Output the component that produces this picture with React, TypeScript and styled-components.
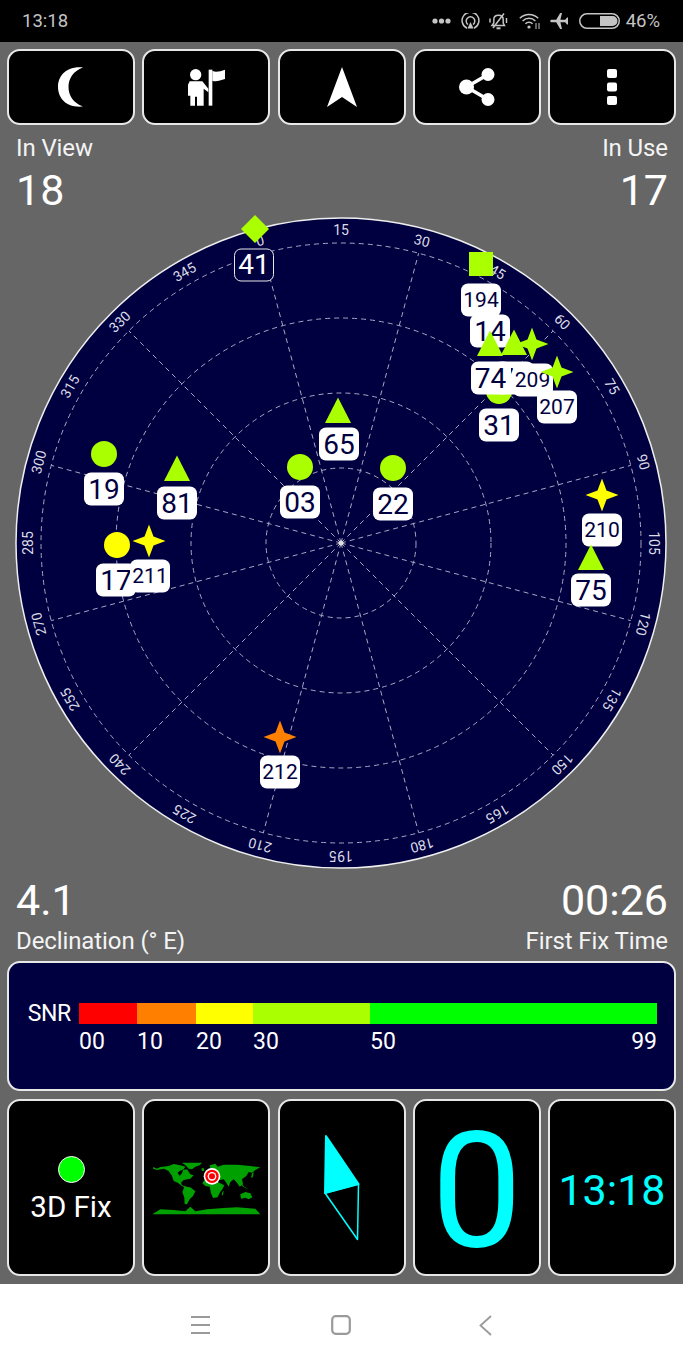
import React from 'react';
import styled, { createGlobalStyle } from 'styled-components';

const NAVY = '#000040';
const LIME = '#aaff00';
const YELLOW = '#ffff00';
const ORANGE = '#ff8000';
const CYAN = '#00ffff';

const GlobalStyle = createGlobalStyle`
  html, body {
    margin: 0;
    padding: 0;
    background: #666;
    font-family: Roboto, "Liberation Sans", sans-serif;
  }
`;

const Page = styled.div`
  width: 683px;
  height: 1366px;
  display: flex;
  flex-direction: column;
  overflow: hidden;
  background: #666;
  color: #fff;
`;

const StatusBar = styled.div`
  height: 42px;
  flex: none;
  background: #000;
  color: #c4c4c4;
  display: flex;
  align-items: center;
  justify-content: space-between;
  padding: 0 23px 0 22px;
  font-size: 18.5px;
`;

const StatusIcons = styled.div`
  display: flex;
  align-items: center;
  gap: 9.5px;
`;

const BatteryText = styled.span`
  margin-left: -3.5px;
`;

const Main = styled.div`
  flex: 1;
  display: flex;
  flex-direction: column;
`;

const ButtonRow = styled.div<{ $tall?: boolean }>`
  display: grid;
  grid-template-columns: repeat(5, 128px);
  column-gap: 7.25px;
  padding: 0 7px;
  height: ${(p) => (p.$tall ? '177px' : '76px')};
  margin-top: ${(p) => (p.$tall ? '8px' : '7px')};
`;

const Tile = styled.div`
  box-sizing: border-box;
  background: #000;
  border: 2px solid #e8e8e8;
  border-radius: 13px;
  display: flex;
  flex-direction: column;
  align-items: center;
  justify-content: center;
  min-width: 0;
`;

const StatRow = styled.div<{ $top?: boolean }>`
  display: flex;
  justify-content: space-between;
  padding: 0 15px 0 16px;
  height: ${(p) => (p.$top ? '81px' : '76px')};
  margin-top: ${(p) => (p.$top ? '9px' : '10px')};
  margin-bottom: ${(p) => (p.$top ? '2px' : '0')};
`;

const Stat = styled.div<{ $right?: boolean; $gap: number }>`
  display: flex;
  flex-direction: column;
  justify-content: flex-end;
  gap: ${(p) => p.$gap}px;
  align-items: ${(p) => (p.$right ? 'flex-end' : 'flex-start')};
`;

const StatLabel = styled.div`
  font-size: 24px;
  line-height: 28px;
  color: #f4f4f4;
  letter-spacing: -0.1px;
`;

const StatValue = styled.div`
  font-size: 43px;
  line-height: 50px;
`;

const Sky = styled.div`
  position: relative;
  width: 652px;
  height: 652px;
  margin: 0 0 0 15px;
  flex: none;
`;

const SkySvg = styled.svg`
  display: block;
  width: 652px;
  height: 652px;
`;

// satellite things are placed on the plot by their own position
const Sat = styled.div.attrs<{ $x: number; $y: number }>((p) => ({
  style: { left: p.$x - 15, top: p.$y - 217 },
}))<{ $x: number; $y: number }>`
  position: absolute;
  transform: translate(-50%, -50%);
`;

const Badge = styled(Sat)<{ $small?: boolean; $unused?: boolean }>`
  box-sizing: border-box;
  width: 40px;
  height: 33px;
  border-radius: 7px;
  display: flex;
  align-items: center;
  justify-content: center;
  background: ${(p) => (p.$unused ? NAVY : '#fff')};
  border: ${(p) => (p.$unused ? '1px solid #e8e8e8' : 'none')};
  color: ${(p) => (p.$unused ? '#fff' : NAVY)};
  font-size: ${(p) => (p.$small ? '21px' : '28px')};
  line-height: 1;
`;

const Marker = styled(Sat)`
  display: flex;
`;

const SnrPanel = styled.div`
  box-sizing: border-box;
  height: 130px;
  margin: 6px 7px 0;
  background: ${NAVY};
  border: 2px solid #e8e8e8;
  border-radius: 13px;
  display: grid;
  grid-template-columns: 70px 578px;
  align-content: center;
  row-gap: 5px;
  padding-top: 5px;
`;

const SnrName = styled.div`
  font-size: 23px;
  line-height: 21px;
  text-align: right;
  padding-right: 8px;
  letter-spacing: -0.3px;
`;

const SnrBar = styled.div`
  display: flex;
  height: 21px;
`;

const SnrSegment = styled.div<{ $width: number; $color: string }>`
  width: ${(p) => p.$width}px;
  background: ${(p) => p.$color};
`;

const SnrScale = styled.div`
  grid-column: 2;
  display: flex;
  font-size: 23px;
  line-height: 26px;
`;

const SnrTick = styled.div<{ $width?: number }>`
  width: ${(p) => (p.$width ? `${p.$width}px` : 'auto')};
  margin-left: ${(p) => (p.$width ? '0' : 'auto')};
`;

const FixTile = styled(Tile)`
  padding-top: 3px;
`;

const FixLabel = styled.div`
  font-size: 29.5px;
  line-height: 32px;
  margin-top: 8px;
`;

const FixDot = styled.div`
  box-sizing: border-box;
  width: 27px;
  height: 27px;
  border-radius: 50%;
  background: #00ff00;
  border: 1px solid #fff;
`;

const BigCount = styled.div`
  font-size: 162px;
  line-height: 162px;
  padding-top: 6px;
  color: ${CYAN};
`;

const Clock = styled.div`
  font-size: 43px;
  line-height: 50px;
  padding-top: 4px;
  color: ${CYAN};
`;

const MapSvg = styled.svg`
  margin-top: 5px;
`;

const NavBar = styled.div`
  height: 82px;
  flex: none;
  margin-top: 8px;
  background: #fff;
  display: flex;
  align-items: center;
  justify-content: center;
  gap: 121px;
`;

const BackSlot = styled.div`
  display: flex;
  margin-left: 7px;
`;

const CX = 326;
const CY = 326;
const polar = (r: number, deg: number) => ({
  x: CX + r * Math.sin((deg * Math.PI) / 180),
  y: CY - r * Math.cos((deg * Math.PI) / 180),
});

const SkyGrid = () => {
  const azimuths = Array.from({ length: 24 }, (_, i) => i * 15);
  return (
    <SkySvg viewBox="0 0 652 652">
      <circle cx={CX} cy={CY} r={325} fill={NAVY} stroke="#eee" strokeWidth={1.5} />
      <g fill="none" stroke="#a8a8c2" strokeWidth={1} strokeDasharray="5 4">
        {[75, 150, 225, 300].map((r) => (
          <circle key={r} cx={CX} cy={CY} r={r} />
        ))}
        {azimuths
          .filter((a) => a % 30 === 0)
          .map((a) => {
            const end = polar(300, a - 15);
            return <line key={a} x1={CX} y1={CY} x2={end.x} y2={end.y} />;
          })}
      </g>
      <circle cx={CX} cy={CY} r={2.5} fill="#ddd" />
      {azimuths.map((a) => {
        const p = polar(313, a - 15);
        return (
          <text
            key={a}
            x={p.x}
            y={p.y}
            fill="#dcdce6"
            fontSize={14}
            textAnchor="middle"
            dominantBaseline="central"
            fontFamily="Roboto, sans-serif"
            transform={`rotate(${a - 15} ${p.x} ${p.y})`}
          >
            {a}
          </text>
        );
      })}
    </SkySvg>
  );
};

type Shape = 'circle' | 'triangle' | 'star' | 'square' | 'diamond';

const ShapeIcon = ({ shape, color }: { shape: Shape; color: string }) => {
  if (shape === 'circle')
    return (
      <svg width="27" height="27" viewBox="0 0 27 27">
        <circle cx="13.5" cy="13.5" r="13" fill={color} />
      </svg>
    );
  if (shape === 'triangle')
    return (
      <svg width="27" height="26" viewBox="0 0 27 26">
        <path d="M13.5 0.5L26.5 26H0.5Z" fill={color} />
      </svg>
    );
  if (shape === 'star')
    return (
      <svg width="33" height="33" viewBox="0 0 33 33">
        <path d="M16.5 0L21 12L33 16.5L21 21L16.5 33L12 21L0 16.5L12 12Z" fill={color} />
      </svg>
    );
  if (shape === 'square')
    return (
      <svg width="24" height="24" viewBox="0 0 24 24">
        <rect width="24" height="24" fill={color} />
      </svg>
    );
  return (
    <svg width="29" height="29" viewBox="0 0 29 29">
      <path d="M14.5 0.5L28.5 14.5L14.5 28.5L0.5 14.5Z" fill={color} />
    </svg>
  );
};

const skyItems: {
  kind: 'm' | 'b';
  x: number;
  y: number;
  shape?: Shape;
  color?: string;
  text?: string;
  small?: boolean;
  unused?: boolean;
}[] = [
  { kind: 'b', x: 254, y: 264.5, text: '41', unused: true },
  { kind: 'm', x: 255, y: 229, shape: 'diamond', color: LIME },
  { kind: 'm', x: 481, y: 264, shape: 'square', color: LIME },
  { kind: 'b', x: 490, y: 331, text: '14' },
  { kind: 'b', x: 481, y: 300, text: '194', small: true },
  { kind: 'm', x: 499, y: 391, shape: 'circle', color: LIME },
  { kind: 'm', x: 490, y: 343, shape: 'triangle', color: LIME },
  { kind: 'm', x: 514, y: 342, shape: 'triangle', color: LIME },
  { kind: 'b', x: 514, y: 378, text: '76' },
  { kind: 'b', x: 490.5, y: 378, text: '74' },
  { kind: 'm', x: 532, y: 344, shape: 'star', color: LIME },
  { kind: 'b', x: 532.5, y: 380, text: '209', small: true },
  { kind: 'm', x: 557, y: 372, shape: 'star', color: LIME },
  { kind: 'b', x: 557, y: 407, text: '207', small: true },
  { kind: 'b', x: 499, y: 425, text: '31' },
  { kind: 'm', x: 338, y: 410, shape: 'triangle', color: LIME },
  { kind: 'b', x: 339, y: 444, text: '65' },
  { kind: 'm', x: 300, y: 467, shape: 'circle', color: LIME },
  { kind: 'b', x: 300, y: 502, text: '03' },
  { kind: 'm', x: 393, y: 468, shape: 'circle', color: LIME },
  { kind: 'b', x: 393, y: 504, text: '22' },
  { kind: 'm', x: 104, y: 454, shape: 'circle', color: LIME },
  { kind: 'b', x: 104, y: 489, text: '19' },
  { kind: 'm', x: 177, y: 468, shape: 'triangle', color: LIME },
  { kind: 'b', x: 177, y: 503, text: '81' },
  { kind: 'm', x: 117, y: 545, shape: 'circle', color: YELLOW },
  { kind: 'b', x: 116, y: 580, text: '17' },
  { kind: 'm', x: 149, y: 541, shape: 'star', color: YELLOW },
  { kind: 'b', x: 150, y: 576, text: '211', small: true },
  { kind: 'm', x: 602, y: 495, shape: 'star', color: YELLOW },
  { kind: 'b', x: 602, y: 530, text: '210', small: true },
  { kind: 'm', x: 591, y: 557, shape: 'triangle', color: LIME },
  { kind: 'b', x: 591, y: 590, text: '75' },
  { kind: 'm', x: 280, y: 737, shape: 'star', color: ORANGE },
  { kind: 'b', x: 280, y: 772, text: '212', small: true },
];

const DotsIcon = () => (
  <svg width="19" height="6" viewBox="0 0 19 6" fill="#c4c4c4">
    <circle cx="3" cy="3" r="2.6" />
    <circle cx="9.5" cy="3" r="2.6" />
    <circle cx="16" cy="3" r="2.6" />
  </svg>
);

const CastIcon = () => (
  <svg width="19" height="16" viewBox="0 0 19 16" fill="none" stroke="#c4c4c4" strokeWidth="1.5">
    <path d="M6 15.2A8.4 8.4 0 1 1 13 15.2" />
    <path d="M7 11.5A4.3 4.3 0 1 1 12 11.5" />
    <path d="M9.5 9L12.5 15.5H6.5Z" fill="#c4c4c4" stroke="none" />
  </svg>
);

const BellOffIcon = () => (
  <svg width="20" height="17" viewBox="0 0 20 17" fill="none" stroke="#c4c4c4" strokeWidth="1.5">
    <path d="M3 12.5H15.5L14.2 10V6.5C14.2 4 12.5 2.2 9.5 2.2C6.5 2.2 4.8 4 4.8 6.5V10Z" />
    <path d="M7.5 15.3H11.5" strokeWidth="2" />
    <path d="M4 15L15 0.5" />
    <path d="M17.5 5V10M1 5.5V9.5" />
  </svg>
);

const WifiIcon = () => (
  <svg width="22" height="16" viewBox="0 0 22 16" fill="none" stroke="#c4c4c4" strokeWidth="1.5">
    <path d="M0.8 5.2A13 13 0 0 1 19.2 5.2" />
    <path d="M3.6 8A9 9 0 0 1 16.4 8" />
    <path d="M6.4 10.8A5 5 0 0 1 13.6 10.8" />
    <circle cx="10" cy="14" r="1.6" fill="#c4c4c4" stroke="none" />
    <path d="M17 10V16M20 10V16" strokeWidth="1" />
  </svg>
);

const PlaneIcon = () => (
  <svg width="19" height="16" viewBox="0 0 19 16" fill="#c4c4c4">
    <path d="M0 8L1 6.8H6.2L10.2 0H12L10.4 6.8H15.2L17 4.6H18V8V8.6L18 11.4H17L15.2 9.2H10.4L12 16H10.2L6.2 9.2H1Z" />
  </svg>
);

const BatteryIcon = () => (
  <svg width="41" height="16" viewBox="0 0 41 16">
    <rect x="0.75" y="0.75" width="39.5" height="14.5" rx="7.2" fill="none" stroke="#c4c4c4" strokeWidth="1.5" />
    <path d="M21 3H33.5A5 5 0 0 1 33.5 13H21Z" fill="#c4c4c4" />
  </svg>
);

const MoonIcon = () => (
  <svg width="26" height="40" viewBox="0 0 26 40">
    <path d="M25 0.5C7 -1 0 10 0 20C0 30 7 41 25 39.5C15 36 10.5 28 10.5 20C10.5 12 15 4 25 0.5Z" fill="#fff" />
  </svg>
);

const ExplorerIcon = () => (
  <svg width="39" height="37" viewBox="36 25 117 111" fill="#fff">
    <circle cx="62" cy="42" r="17" />
    <path d="M44 62H82L100 84V95L86 84V135H66V108H60V135H46V105H39V72Z" />
    <rect x="101" y="27" width="11" height="108" />
    <path d="M112 30C122 36 135 32 150 27V55C135 60 122 64 112 60Z" />
  </svg>
);

const ArrowIcon = () => (
  <svg width="30" height="40" viewBox="0 0 30 40">
    <path d="M15 0L30 40L15 30L0 40Z" fill="#fff" />
  </svg>
);

const ShareIcon = () => (
  <svg width="36" height="38" viewBox="0 0 36 38" fill="#fff" stroke="#fff">
    <circle cx="7.5" cy="19" r="7.5" stroke="none" />
    <circle cx="29" cy="6.5" r="6.5" stroke="none" />
    <circle cx="29" cy="31.5" r="6.5" stroke="none" />
    <path d="M29 6.5L7.5 19L29 31.5" fill="none" strokeWidth="3.5" />
  </svg>
);

const MoreIcon = () => (
  <svg width="10" height="36" viewBox="0 0 10 36" fill="#fff">
    <rect width="10" height="9" rx="2" />
    <rect y="13.5" width="10" height="9" rx="2" />
    <rect y="27" width="10" height="9" rx="2" />
  </svg>
);

const WorldMap = () => (
  <MapSvg width="116" height="60" viewBox="23 92 348 180">
    <g fill="#00a000">
      <path d="M38 113L50 118L60 113L85 110L100 104L120 108L135 112L130 120L118 125L112 130L118 140L125 132L128 122L140 120L150 135L160 138L150 148L130 152L122 160L125 168L140 172L135 176L125 170L112 160L100 155L95 140L85 125L70 118L50 122L38 118Z" />
      <path d="M125 100L150 100L185 100L178 108L165 112L155 120L145 118L138 110Z" />
      <path d="M132 172L150 174L165 186L158 200L148 210L140 225L133 224L132 205L126 188Z" />
      <path d="M208 108L225 103L232 112L250 106L290 106L330 110L360 114L345 122L335 130L325 128L318 140L305 150L308 165L298 172L290 160L280 150L270 158L265 172L258 160L250 150L240 152L220 145L196 146L190 135L198 125L210 118Z" />
      <path d="M192 152L210 148L228 156L240 162L252 168L246 180L238 190L232 204L218 206L212 192L208 172L195 170L186 162Z" />
      <path d="M300 195L315 188L330 192L336 204L325 210L315 205L302 208Z" />
      <path d="M300 160L312 172L325 180L316 176L305 170Z" />
      <path d="M183 118L190 115L192 124L185 126Z" />
      <path d="M335 132L340 128L338 142L332 146Z" />
      <path d="M246 188L250 184L248 198L244 198Z" />
      <path d="M36 255L60 240L100 242L135 246L150 232L165 246L200 240L250 236L290 234L345 238L360 255Z" />
    </g>
    <circle cx="215" cy="141" r="25" fill="#fff" />
    <circle cx="215" cy="141" r="20" fill="#ff0000" />
    <circle cx="215" cy="141" r="13" fill="#fff" />
    <circle cx="215" cy="141" r="9" fill="#ff0000" />
  </MapSvg>
);

const CompassIcon = () => (
  <svg width="36" height="107" viewBox="0 0 36 107" fill={CYAN} stroke={CYAN} strokeLinejoin="round">
    <path d="M2 2L34.5 50L1 59Z" strokeWidth="2" />
    <path d="M1 59L34.5 50L33.5 105.5Z" fill="none" strokeWidth="1.5" />
  </svg>
);

const MenuIcon = () => (
  <svg width="19" height="18" viewBox="0 0 19 18" stroke="#9a9a9a" strokeWidth="1.8">
    <path d="M0 1H19M0 9H19M0 17H19" />
  </svg>
);

const HomeIcon = () => (
  <svg width="20" height="20" viewBox="0 0 20 20">
    <rect x="1.2" y="1.2" width="17.6" height="17.6" rx="3.5" fill="none" stroke="#9a9a9a" strokeWidth="2.2" />
  </svg>
);

const BackIcon = () => (
  <svg width="13" height="21" viewBox="0 0 13 21">
    <path d="M12 1L1.5 10.5L12 20" fill="none" stroke="#9a9a9a" strokeWidth="1.8" />
  </svg>
);

const snrSegments = [
  { width: 58, color: '#ff0000' },
  { width: 59, color: ORANGE },
  { width: 57, color: YELLOW },
  { width: 117, color: LIME },
  { width: 287, color: '#00ff00' },
];

export default function App() {
  return (
    <Page>
      <GlobalStyle />
      <StatusBar>
        <span>13:18</span>
        <StatusIcons>
          <DotsIcon />
          <CastIcon />
          <BellOffIcon />
          <WifiIcon />
          <PlaneIcon />
          <BatteryIcon />
          <BatteryText>46%</BatteryText>
        </StatusIcons>
      </StatusBar>
      <Main>
        <ButtonRow>
          <Tile>
            <MoonIcon />
          </Tile>
          <Tile>
            <ExplorerIcon />
          </Tile>
          <Tile>
            <ArrowIcon />
          </Tile>
          <Tile>
            <ShareIcon />
          </Tile>
          <Tile>
            <MoreIcon />
          </Tile>
        </ButtonRow>
        <StatRow $top>
          <Stat $gap={3}>
            <StatLabel>In View</StatLabel>
            <StatValue>18</StatValue>
          </Stat>
          <Stat $gap={3} $right>
            <StatLabel>In Use</StatLabel>
            <StatValue>17</StatValue>
          </Stat>
        </StatRow>
        <Sky>
          <SkyGrid />
          {skyItems.map((item, i) =>
            item.kind === 'm' ? (
              <Marker key={i} $x={item.x} $y={item.y}>
                <ShapeIcon shape={item.shape!} color={item.color!} />
              </Marker>
            ) : (
              <Badge key={i} $x={item.x} $y={item.y} $small={item.small} $unused={item.unused}>
                {item.text}
              </Badge>
            ),
          )}
        </Sky>
        <StatRow>
          <Stat $gap={2}>
            <StatValue>4.1</StatValue>
            <StatLabel>Declination (° E)</StatLabel>
          </Stat>
          <Stat $gap={2} $right>
            <StatValue>00:26</StatValue>
            <StatLabel>First Fix Time</StatLabel>
          </Stat>
        </StatRow>
        <SnrPanel>
          <SnrName>SNR</SnrName>
          <SnrBar>
            {snrSegments.map((s) => (
              <SnrSegment key={s.color} $width={s.width} $color={s.color} />
            ))}
          </SnrBar>
          <SnrScale>
            <SnrTick $width={58}>00</SnrTick>
            <SnrTick $width={59}>10</SnrTick>
            <SnrTick $width={57}>20</SnrTick>
            <SnrTick $width={117}>30</SnrTick>
            <SnrTick $width={200}>50</SnrTick>
            <SnrTick>99</SnrTick>
          </SnrScale>
        </SnrPanel>
        <ButtonRow $tall>
          <FixTile>
            <FixDot />
            <FixLabel>3D Fix</FixLabel>
          </FixTile>
          <Tile>
            <WorldMap />
          </Tile>
          <Tile>
            <CompassIcon />
          </Tile>
          <Tile>
            <BigCount>0</BigCount>
          </Tile>
          <Tile>
            <Clock>13:18</Clock>
          </Tile>
        </ButtonRow>
      </Main>
      <NavBar>
        <MenuIcon />
        <HomeIcon />
        <BackSlot>
          <BackIcon />
        </BackSlot>
      </NavBar>
    </Page>
  );
}
